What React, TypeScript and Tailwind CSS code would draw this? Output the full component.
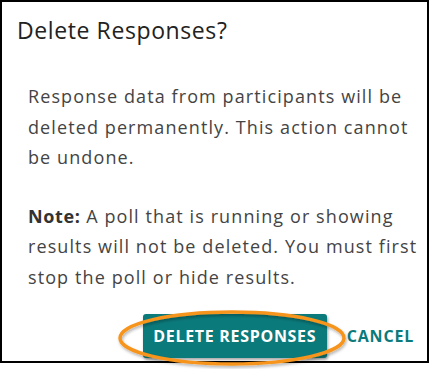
import React from "react";

export default function App() {
  return (
    <div className="w-[431px] h-[369px] bg-white" style={{ fontFamily: "'Open Sans', Lato, sans-serif" }}>
      <div className="relative w-[429px] h-[363px] border-2 border-black bg-white flex flex-col">
        <h1 className="pl-[15px] pt-[14px] text-[23px] leading-[28px] tracking-[0.6px] text-[#222222] font-normal">
          Delete Responses?
        </h1>
        <div className="pl-[26px] pr-[2px] mt-[37px] text-[18px] leading-[30.5px] tracking-[1.1px] text-[#444444] whitespace-nowrap">
          <p>
            <span className="block">Response data from participants will be</span>
            <span className="block">deleted permanently. This action cannot</span>
            <span className="block">be undone.</span>
          </p>
          <p className="mt-[28px]">
            <span className="block">
              <span className="font-bold tracking-[0.6px] text-[#333333]">Note:</span> A poll that is running or showing
            </span>
            <span className="block">results will not be deleted. You must first</span>
            <span className="block">stop the poll or hide results.</span>
          </p>
        </div>
        <div className="mt-auto flex items-center justify-end pr-[13px] pb-[3px]">
          <button className="w-[184px] h-[44px] rounded-[3px] bg-[#0b7a7b] text-white font-bold text-[16px] tracking-[0.7px] shadow-[1px_2px_3px_rgba(0,0,0,0.35)]">
            DELETE RESPONSES
          </button>
          <span className="ml-[20px] text-[#0b7a7b] font-bold text-[16px] tracking-[0.8px]">CANCEL</span>
        </div>
        <svg className="absolute left-[114px] top-[306px] overflow-visible" width="240" height="64" viewBox="0 0 240 64">
          <defs>
            <filter id="sh" x="-10%" y="-30%" width="120%" height="160%">
              <feDropShadow dx="1" dy="2" stdDeviation="1.5" floodColor="#000" floodOpacity="0.3" />
            </filter>
          </defs>
          <ellipse cx="116" cy="30" rx="112" ry="26" fill="none" stroke="#f7941d" strokeWidth="3.5" filter="url(#sh)" />
        </svg>
      </div>
    </div>
  );
}
